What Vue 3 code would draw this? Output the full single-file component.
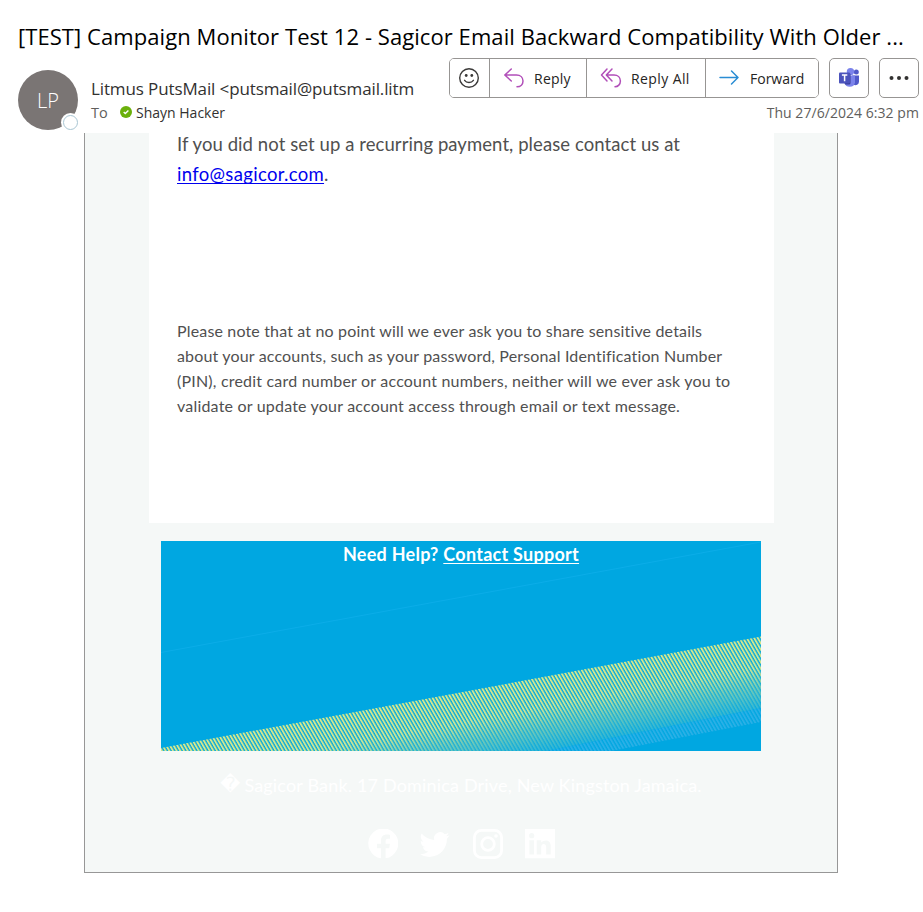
<script setup>
const subject = '[TEST] Campaign Monitor Test 12 - Sagicor Email Backward Compatibility With Older ...'
const notice = [
  { text: 'Please note that at no point will we ever ask you to share sensitive details', cls: 'n1' },
  { text: 'about your accounts, such as your password, Personal Identification Number', cls: 'n1' },
  { text: '(PIN), credit card number or account numbers, neither will we ever ask you to', cls: 'n2' },
  { text: 'validate or update your account access through email or text message.', cls: 'n2' },
]
</script>

<template>
  <div class="window">
    <header class="header">
      <h1 class="subject">{{ subject }}</h1>
      <div class="meta">
        <div class="avatar">
          <span class="initials">LP</span>
          <span class="presence"></span>
        </div>
        <div class="people">
          <div class="from">Litmus PutsMail &lt;putsmail@putsmail.litm</div>
          <div class="to">
            <span class="to-label">To</span>
            <svg class="check" width="12" height="12" viewBox="0 0 12 12">
              <circle cx="6" cy="6" r="6" fill="#6bb00b" />
              <path d="M3.700 6.100 5.300 7.600 8.400 4.600" fill="none" stroke="#fff" stroke-width="1.400" />
            </svg>
            <span class="to-name">Shayn Hacker</span>
          </div>
        </div>
        <div class="side">
          <div class="actions">
            <div class="group">
              <button class="btn smile">
                <svg width="22" height="22" viewBox="0 0 22 22" fill="none" stroke="#3b3a39" stroke-width="1.400">
                  <circle cx="11" cy="11" r="9.300" />
                  <path d="M6.600 13.300c2 2.900 6.800 2.900 8.800 0" stroke-linecap="round" />
                  <circle cx="8.200" cy="8.500" r="1.400" fill="#3b3a39" stroke="none" />
                  <circle cx="13.800" cy="8.500" r="1.400" fill="#3b3a39" stroke="none" />
                </svg>
              </button>
              <button class="btn reply">
                <svg width="22" height="22" viewBox="0 0 22 22" fill="none" stroke="#b14fb9" stroke-width="1.500" stroke-linecap="round" stroke-linejoin="round">
                  <path d="M8.300 2 1.800 8l6.500 6M2 8h11.500c4 0 6.500 2.700 6.500 6s-2.400 5.800-6 5.800" />
                </svg>
                <span class="spread">Reply</span>
              </button>
              <button class="btn reply-all">
                <svg width="22" height="22" viewBox="0 0 22 22" fill="none" stroke="#b14fb9" stroke-width="1.500" stroke-linecap="round" stroke-linejoin="round">
                  <path d="M7 2 1.500 8 7 14M12 2 6.300 8l5.700 6M6.500 8h7.500c4 0 6.400 2.700 6.400 6s-2.400 5.800-5.400 5.800" />
                </svg>
                <span class="spread-more">Reply All</span>
              </button>
              <button class="btn forward">
                <svg width="22" height="22" viewBox="0 0 22 22" fill="none" stroke="#2a8dd4" stroke-width="1.500" stroke-linecap="round" stroke-linejoin="round">
                  <path d="M2 10.500h18M13.500 4 20 10.500l-6.500 6.500" />
                </svg>
                <span>Forward</span>
              </button>
            </div>
            <button class="btn solo">
              <svg width="22" height="22" viewBox="0 0 22 22">
                <circle cx="18.300" cy="5" r="2.500" fill="#5059c9" />
                <path d="M14 8.500h7v6a3.500 3.500 0 0 1-5.500 3z" fill="#5059c9" />
                <circle cx="12.500" cy="4.600" r="3.700" fill="#7b83eb" />
                <path d="M6.500 8.500H17v6.800a5.300 5.300 0 0 1-10.500 0z" fill="#7b83eb" />
                <path d="M6.500 6H11a1.500 1.500 0 0 1 1.500 1.500V16A1.500 1.500 0 0 1 11 17.500H7A6 6 0 0 1 6.500 15z" fill="#343a94" />
                <rect x="1" y="5.500" width="11" height="11" rx="1" fill="#4b53bc" />
                <path d="M3.900 8.100h5.400M6.600 8v6.300" stroke="#fff" stroke-width="1.500" />
              </svg>
            </button>
            <button class="btn solo more">
              <svg width="20" height="6" viewBox="0 0 20 6" fill="#323130">
                <circle cx="2.500" cy="3" r="2" /><circle cx="10" cy="3" r="2" /><circle cx="17.500" cy="3" r="2" />
              </svg>
            </button>
          </div>
          <time class="date">Thu 27/6/2024 6:32 pm</time>
        </div>
      </div>
    </header>

    <main class="mail">
      <section class="card">
        <p class="lead">
          <span class="lead-line">If you did not set up a recurring payment, please contact us at</span>
          <span class="lead-line"><a class="link" href="#">info@sagicor.com</a>.</span>
        </p>
        <p class="notice">
          <span v-for="line in notice" :key="line.text" :class="line.cls">{{ line.text }}</span>
        </p>
      </section>

      <section class="banner">
        <svg class="art" width="600" height="210" viewBox="0 0 600 210">
          <defs>
            <linearGradient id="fade" gradientUnits="userSpaceOnUse" x1="500" y1="115" x2="513.500" y2="187">
              <stop offset="0" stop-color="#d8e88a" />
              <stop offset=".4" stop-color="#cbe594" />
              <stop offset=".7" stop-color="#6cc8b9" />
              <stop offset="1" stop-color="#2bb4d8" />
            </linearGradient>
            <pattern id="lines" width="3.180" height="10" patternUnits="userSpaceOnUse" patternTransform="rotate(-30)">
              <rect width="1.850" height="10" fill="#fff" />
            </pattern>
            <mask id="stripes" maskUnits="userSpaceOnUse" x="0" y="0" width="600" height="210">
              <rect width="600" height="210" fill="url(#lines)" />
            </mask>
            <linearGradient id="haze" gradientUnits="userSpaceOnUse" x1="500" y1="115" x2="513.500" y2="187">
              <stop offset=".3" stop-color="#7dd0a8" stop-opacity="0" />
              <stop offset=".75" stop-color="#5cc4c0" stop-opacity=".35" />
              <stop offset="1" stop-color="#2bb4d8" stop-opacity=".2" />
            </linearGradient>
          </defs>
          <path d="M0 111.500 600 1" stroke="#0badE8" stroke-width="1" />
          <path d="M0 207 600 96v71L385 210H0z" fill="url(#haze)" />
          <g mask="url(#stripes)">
            <path d="M0 207 600 95.500v71.500L385 210H0z" fill="url(#fade)" />
            <path d="M385 210 600 167v14L450 210z" fill="#2bb0e6" />
          </g>
        </svg>
        <p class="help"><span class="help-q">Need Help?</span> <a class="help-link" href="#">Contact Support</a></p>
      </section>

      <p class="address"><span class="mark">&#xFFFD;</span><span>Sagicor Bank. 17 Dominica Drive, New Kingston Jamaica.</span></p>

      <nav class="social">
        <svg width="30" height="30" viewBox="0 0 30 30">
          <path fill="#fff" d="M13 29.300V19.200H9v-4.500h4v-3.200c0-3.900 2.300-6 5.900-6 1.100 0 2.400.2 3.100.4v3.800h-2c-1.900 0-2.400 1.200-2.400 2.400v2.600h4.300l-.7 4.500h-3.600v10.100A15 15 0 1 0 13 29.300z" />
        </svg>
        <svg width="30" height="30" viewBox="0 0 24 24">
          <path fill="#fff" d="M23.600 4.900a9.700 9.700 0 0 1-2.800.8 4.900 4.900 0 0 0 2.100-2.700 9.900 9.900 0 0 1-3.100 1.200 4.900 4.900 0 0 0-8.400 4.500A14 14 0 0 1 1.300 3.600a4.900 4.900 0 0 0 1.500 6.600 4.900 4.900 0 0 1-2.200-.6 4.900 4.900 0 0 0 3.900 4.900 4.900 4.900 0 0 1-2.200.1 4.900 4.900 0 0 0 4.600 3.400A9.900 9.900 0 0 1 0 20.100a13.900 13.900 0 0 0 7.500 2.200c9.200 0 14.300-7.700 14-14.600a10 10 0 0 0 2.100-2.800z" />
        </svg>
        <svg width="30" height="30" viewBox="0 0 30 30" fill="none" stroke="#fff" stroke-width="2.800">
          <rect x="1.400" y="1.400" width="27.200" height="27.200" rx="7" />
          <circle cx="15" cy="15" r="6.300" />
          <circle cx="23" cy="7" r="1.800" fill="#fff" stroke="none" />
        </svg>
        <svg width="30" height="30" viewBox="0 0 30 30">
          <path fill="#fff" fill-rule="evenodd" d="M0 0h30v29.300H0zM6.700 4.100a2.600 2.600 0 1 0 0 5.200 2.600 2.600 0 0 0 0-5.200zM4.400 11.300v14.300H9V11.300zM11.700 11.300v14.300h4.500v-7.500c0-4.200 5-4 5 0v7.500h4.500v-8.800c0-6.600-7-6.300-9.500-3.200v-2.300z" />
        </svg>
      </nav>
    </main>
  </div>
</template>

<style>
body {
  margin: 0;
  background: #fff;
}
</style>

<style scoped>
.window {
  width: 923px;
  height: 912px;
  overflow: hidden;
  box-sizing: border-box;
  background: #fff;
  font-family: "Open Sans", "Noto Sans", sans-serif;
}
p, h1 { margin: 0; }
.header { height: 133px; box-sizing: border-box; padding: 19px 4px 0 18px; }
.subject {
  height: 34px;
  line-height: 34px;
  font-size: 22px;
  font-weight: 400;
  letter-spacing: 0.068px;
  white-space: nowrap;
  color: #000;
}
.meta { display: flex; align-items: flex-start; padding-top: 5px; }
.avatar {
  position: relative;
  width: 60px;
  height: 60px;
  margin-top: 12px;
  border-radius: 50%;
  background: #7a7574;
  color: #fff;
  display: flex;
  align-items: center;
  justify-content: center;
  flex: none;
}
.initials { font-size: 20px; font-weight: 300; padding-top: 1px; }
.presence {
  position: absolute;
  right: 0;
  bottom: 0;
  width: 13px;
  height: 13px;
  border: 1px solid #a9c6d3;
  border-radius: 50%;
  background: #fff;
  box-shadow: 0 0 0 2px #fff;
}
.people { width: 326px; margin: 19px 0 0 13px; flex: none; }
.from {
  height: 24px;
  line-height: 24px;
  font-size: 17px;
  letter-spacing: -0.120px;
  color: #323130;
  white-space: nowrap;
}
.to { display: flex; align-items: center; height: 24px; font-size: 14px; line-height: 24px; }
.to-label { width: 29px; color: #605e5c; font-size: 14.500px; }
.check { margin-right: 4px; margin-top: -2px; }
.to-name { color: #323130; }
.side { margin-left: auto; display: flex; flex-direction: column; align-items: flex-end; }
.actions { display: flex; gap: 10px; }
.group { display: flex; height: 40px; width: 370px; box-sizing: border-box; border: 1px solid #979593; border-radius: 5px; overflow: hidden; }
.btn {
  display: flex;
  align-items: center;
  box-sizing: border-box;
  margin: 0;
  padding: 0;
  border: 0;
  background: #fff;
  color: #252423;
  font-family: inherit;
  font-size: 14px;
}
.group .btn + .btn { border-left: 1px solid #979593; }
.smile { width: 39px; padding-left: 8px; }
.reply { width: 97px; padding-left: 13px; gap: 9px; }
.reply-all { width: 119px; padding-left: 13px; gap: 9px; }
.forward { width: 113px; padding-left: 12px; gap: 10px; }
.spread { letter-spacing: 0.250px; }
.spread-more { letter-spacing: 0.400px; }
.solo { width: 40px; height: 40px; border: 1px solid #979593; border-radius: 5px; justify-content: center; }
.date { height: 24px; line-height: 24px; margin-top: 3px; font-size: 14px; letter-spacing: 0.050px; color: #605e5c; white-space: nowrap; }

.mail {
  width: 754px;
  height: 740px;
  margin-left: 84px;
  box-sizing: border-box;
  border: 1px solid #979797;
  border-top: 0;
  background: #f5f8f7;
  font-family: Lato, "Liberation Sans", sans-serif;
  display: flex;
  flex-direction: column;
}
.card {
  width: 625px;
  height: 390px;
  margin-left: 64px;
  box-sizing: border-box;
  padding: 0 28px;
  background: #fff;
  color: #505050;
  overflow: hidden;
}
.lead { font-size: 18.500px; margin-top: -4px; white-space: nowrap; }
.lead-line { display: block; height: 30px; line-height: 30px; letter-spacing: 0.075px; }
.link { color: #0000ee; letter-spacing: 0.320px; text-decoration: underline; text-underline-offset: 2px; text-decoration-thickness: 1px; text-decoration-skip-ink: none; }
.notice { padding-top: 129px; font-size: 16px; white-space: nowrap; }
.notice span { display: block; height: 25px; line-height: 25px; }
.n1 { letter-spacing: 0.160px; }
.n2 { letter-spacing: 0.196px; }
.banner {
  position: relative;
  width: 600px;
  height: 210px;
  margin: 18px 0 0 76px;
  background: #00a7e1;
  overflow: hidden;
}
.art { position: absolute; left: 0; top: 0; }
.help {
  position: relative;
  text-align: center;
  height: 27px;
  line-height: 27px;
  font-size: 18px;
  font-weight: 700;
  letter-spacing: 0.270px;
  color: #fff;
}
.help-link { color: #fff; text-underline-offset: 2px; text-decoration-thickness: 1px; text-decoration-skip-ink: none; }
.address {
  display: flex;
  justify-content: center;
  gap: 4px;
  height: 30px;
  margin-top: 19px;
  line-height: 30px;
  font-size: 18px;
  letter-spacing: 0.170px;
  color: #fff;
  white-space: nowrap;
}
.mark { font-family: "DejaVu Sans", sans-serif; font-size: 19.500px; }
.social { display: flex; gap: 22.400px; margin: 29px 0 0 283px; }
</style>
